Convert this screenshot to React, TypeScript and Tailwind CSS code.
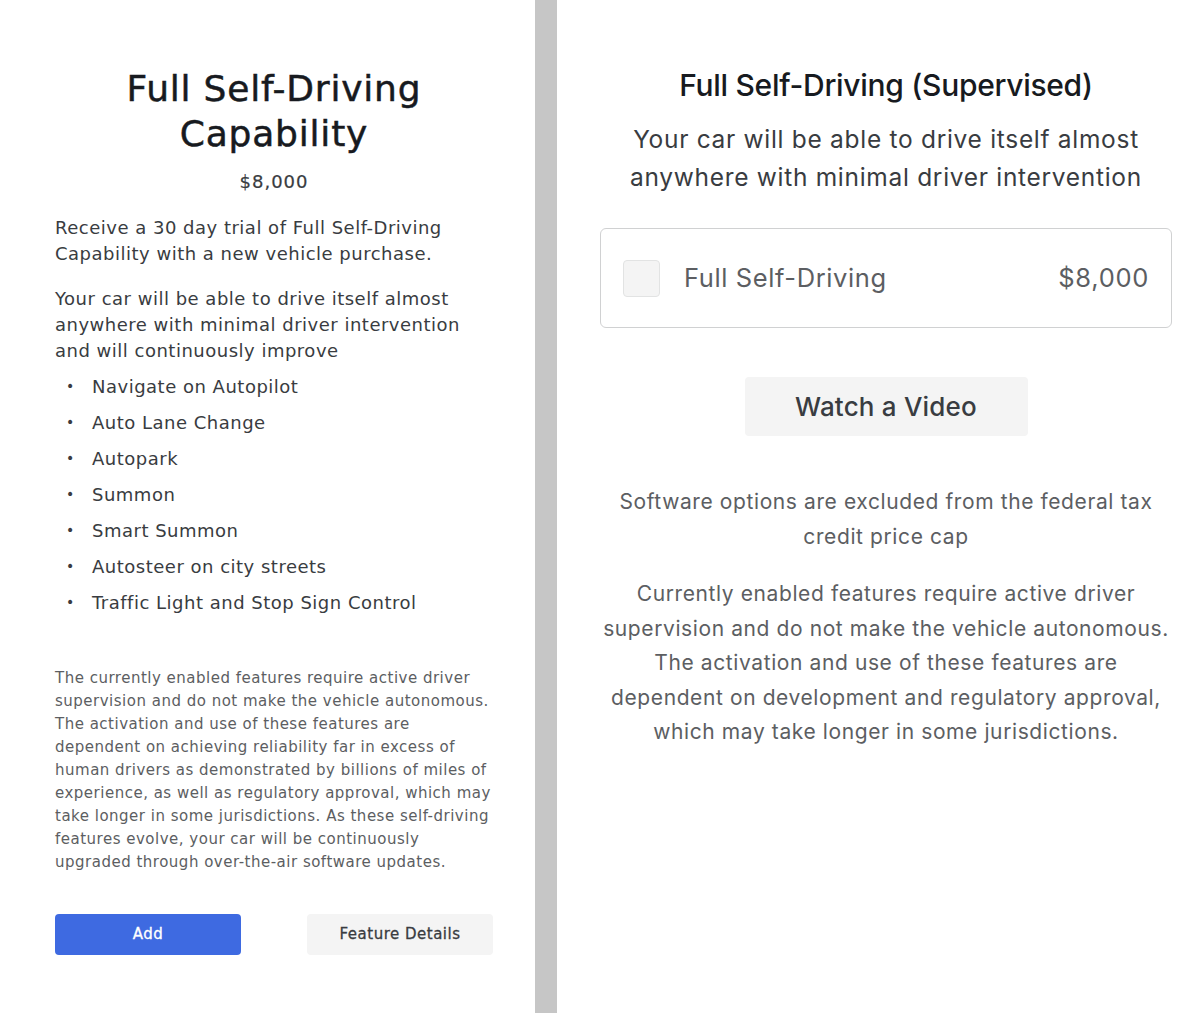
import React from 'react'

const features = [
  'Navigate on Autopilot',
  'Auto Lane Change',
  'Autopark',
  'Summon',
  'Smart Summon',
  'Autosteer on city streets',
  'Traffic Light and Stop Sign Control',
]

function LeftPanel() {
  return (
    <div className="w-[535px] shrink-0 pl-[55px] pr-[42px] pt-[66px] font-['DejaVu_Sans',sans-serif] text-[#393c41]">
      <h1 className="text-center text-[36px] leading-[45px] tracking-[0.8px] text-[#171a20] [-webkit-text-stroke:0.5px_#171a20]">
        Full Self-Driving
        <br />
        Capability
      </h1>
      <p className="mt-[14px] text-center text-[18px] leading-[24px] tracking-[1px] text-[#393c41] [-webkit-text-stroke:0.2px_#393c41]">
        $8,000
      </p>

      <p className="mt-[21px] text-[18px] leading-[25.5px] tracking-[0.5px]">
        Receive a 30 day trial of Full Self-Driving Capability with a new vehicle purchase.
      </p>
      <p className="mt-[20px] text-[18px] leading-[26px] tracking-[0.5px]">
        Your car will be able to drive itself almost anywhere with minimal driver intervention and will continuously
        improve
      </p>
      <ul className="mt-[4px]">
        {features.map((f) => (
          <li key={f} className="flex h-[36px] items-center text-[18px] tracking-[0.5px]">
            <span className="w-[37px] pl-[11px] text-[14px]">•</span>
            {f}
          </li>
        ))}
      </ul>

      <p className="mt-[47px] text-[15px] leading-[23px] tracking-[0.5px] text-[#5c5e62]">
        The currently enabled features require active driver supervision and do not make the vehicle autonomous. The
        activation and use of these features are dependent on achieving reliability far in excess of human drivers as
        demonstrated by billions of miles of experience, as well as regulatory approval, which may take longer in some
        jurisdictions. As these self-driving features evolve, your car will be continuously upgraded through
        over-the-air software updates.
      </p>

      <div className="mt-[40px] flex justify-between">
        <button className="h-[41px] w-[186px] rounded-[4px] bg-[#3e6ae1] text-[15px] tracking-[0.5px] text-white [-webkit-text-stroke:0.3px_#ffffff]">
          Add
        </button>
        <button className="h-[41px] w-[186px] rounded-[4px] bg-[#f4f4f4] text-[15px] tracking-[0.5px] text-[#393c41] [-webkit-text-stroke:0.3px_#393c41]">
          Feature Details
        </button>
      </div>
    </div>
  )
}

function RightPanel() {
  return (
    <div className="flex-1 pl-[43px] pr-[28px] pt-[66px] text-center font-['Inter',sans-serif]">
      <h2 className="text-[30px] font-medium leading-[38px] tracking-[-0.3px] text-[#171a20]">
        Full Self-Driving (Supervised)
      </h2>
      <p className="mt-[16px] text-[24.5px] leading-[38px] tracking-[0.7px] text-[#393c41]">
        Your car will be able to drive itself almost anywhere with minimal driver intervention
      </p>

      <div className="mt-[32px] flex h-[100px] items-center rounded-[6px] border border-[#d0d1d2] pl-[22px] pr-[22px]">
        <span className="h-[37px] w-[37px] rounded-[4px] border border-[#e2e3e3] bg-[#f4f4f4]" />
        <span className="ml-[24px] text-[25.5px] tracking-[0.6px] text-[#5c5e62]">Full Self-Driving</span>
        <span className="ml-auto text-[25.5px] tracking-[0.7px] text-[#5c5e62]">$8,000</span>
      </div>

      <button className="mt-[49px] h-[59px] w-[283px] rounded-[4px] bg-[#f4f4f4] text-[26px] font-medium tracking-[0.2px] text-[#393c41]">
        Watch a Video
      </button>

      <p className="mt-[48px] text-[21px] leading-[35px] tracking-[0.6px] text-[#5c5e62]">
        Software options are excluded from the federal tax credit price cap
      </p>
      <p className="mt-[23px] text-[21px] leading-[34.5px] tracking-[0.6px] text-[#5c5e62]">
        Currently enabled features require active driver supervision and do not make the vehicle autonomous. The
        activation and use of these features are dependent on development and regulatory approval, which may take
        longer in some jurisdictions.
      </p>
    </div>
  )
}

export default function App() {
  return (
    <div className="flex h-[1013px] w-[1200px] overflow-hidden bg-white">
      <LeftPanel />
      <div className="w-[22px] shrink-0 bg-[#c6c6c6]" />
      <RightPanel />
    </div>
  )
}
